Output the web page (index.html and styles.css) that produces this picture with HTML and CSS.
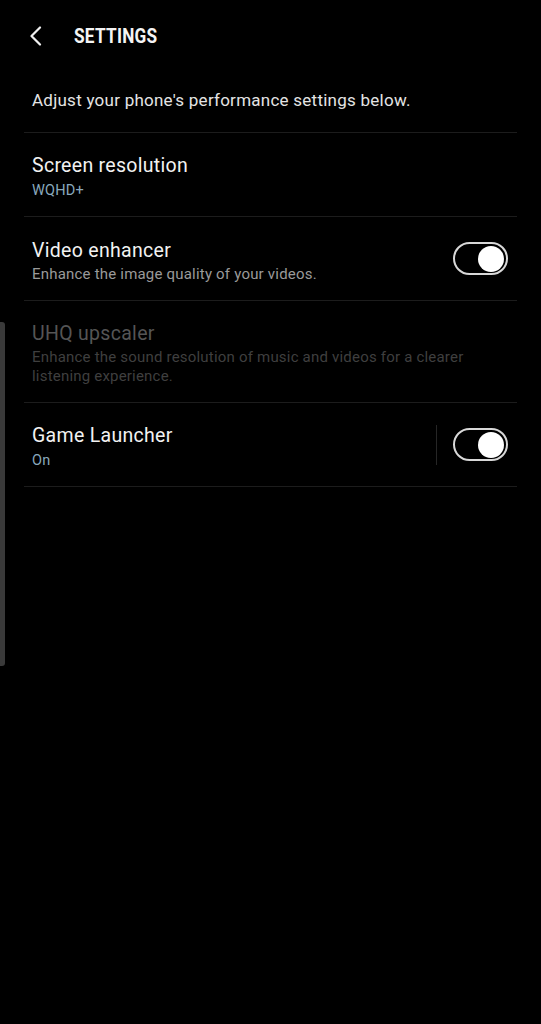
FILE: index.html
```html
<!DOCTYPE html>
<html lang="en">
<head>
  <meta charset="UTF-8" />
  <meta name="viewport" content="width=device-width, initial-scale=1.0"/>
  <title>Settings</title>
  <link rel="stylesheet" href="styles.css">
</head>
<body>

<header class="topbar">
  <svg class="back" width="14" height="20" viewBox="0 0 14 20">
    <path d="M11 1.5 L2.5 10 L11 18.5" fill="none" stroke="#f0f0f0" stroke-width="2.2" stroke-linecap="round" stroke-linejoin="round"/>
  </svg>
  <h1>SETTINGS</h1>
</header>

<p class="intro">Adjust your phone's performance settings below.</p>

<div class="list">
  <div class="row">
    <div class="text">
      <div class="title">Screen resolution</div>
      <div class="value">WQHD+</div>
    </div>
  </div>

  <div class="row">
    <div class="text">
      <div class="title">Video enhancer</div>
      <div class="sub">Enhance the image quality of your videos.</div>
    </div>
    <div class="switch on"><span class="knob"></span></div>
  </div>

  <div class="row disabled">
    <div class="text">
      <div class="title">UHQ upscaler</div>
      <div class="sub">Enhance the sound resolution of music and videos for a clearer listening experience.</div>
    </div>
  </div>

  <div class="row">
    <div class="text">
      <div class="title">Game Launcher</div>
      <div class="value">On</div>
    </div>
    <div class="sep"></div>
    <div class="switch on"><span class="knob"></span></div>
  </div>
</div>

<div class="edge"></div>

</body>
</html>
```

FILE: styles.css
```css
body {
  font-family: Roboto, "Noto Sans", sans-serif;
  background: #000;
  color: #f0f0f0;
  margin: 0;
  padding: 0;
  height: 1024px;
  overflow: hidden;
  position: relative;
}
.topbar {
  display: flex;
  align-items: center;
  height: 72px;
  padding-left: 29px;
}
.back {
  display: block;
  margin-right: 31px;
}
.topbar h1 {
  margin: 0;
  font-size: 20px;
  font-weight: 700;
  color: #f4f4f4;
  transform: scaleX(0.86);
  transform-origin: left center;
  letter-spacing: 0.3px;
}
.intro {
  margin: 0;
  padding: 18px 32px 0;
  height: 42px;
  font-size: 17px;
  line-height: 20px;
  letter-spacing: 0.25px;
  color: #e4e4e4;
}
.list {
  margin: 0 24px;
  border-bottom: 1px solid #1c1c1c;
}
.row {
  display: flex;
  align-items: center;
  min-height: 84px;
  border-top: 1px solid #1c1c1c;
  padding: 0 9px 0 8px;
  box-sizing: border-box;
}
.row.disabled {
  min-height: 102px;
}
.text {
  flex: 1;
  padding-top: 4px;
}
.title {
  font-size: 19.5px;
  line-height: 26px;
  letter-spacing: 0.3px;
  color: #f2f2f2;
  margin-bottom: 1px;
}
.value {
  font-size: 14.5px;
  line-height: 21px;
  letter-spacing: 0.2px;
  color: #89a9bd;
}
.sub {
  font-size: 15px;
  line-height: 19px;
  letter-spacing: 0.2px;
  color: #9a9a9a;
}
.disabled .title {
  color: #555;
}
.disabled .sub {
  color: #3f3f3f;
  padding-right: 30px;
}
.sep {
  width: 1px;
  height: 40px;
  background: #262626;
  margin-right: 16px;
}
.switch {
  width: 55px;
  height: 33px;
  border: 2px solid #d8d8d8;
  border-radius: 17px;
  box-sizing: border-box;
  display: flex;
  align-items: center;
  justify-content: flex-end;
  padding-right: 2px;
}
.knob {
  width: 26px;
  height: 26px;
  border-radius: 50%;
  background: #fff;
}
.edge {
  position: absolute;
  left: 0;
  top: 322px;
  width: 5px;
  height: 344px;
  background: #3a3a3a;
  border-radius: 0 3px 3px 0;
}
```
